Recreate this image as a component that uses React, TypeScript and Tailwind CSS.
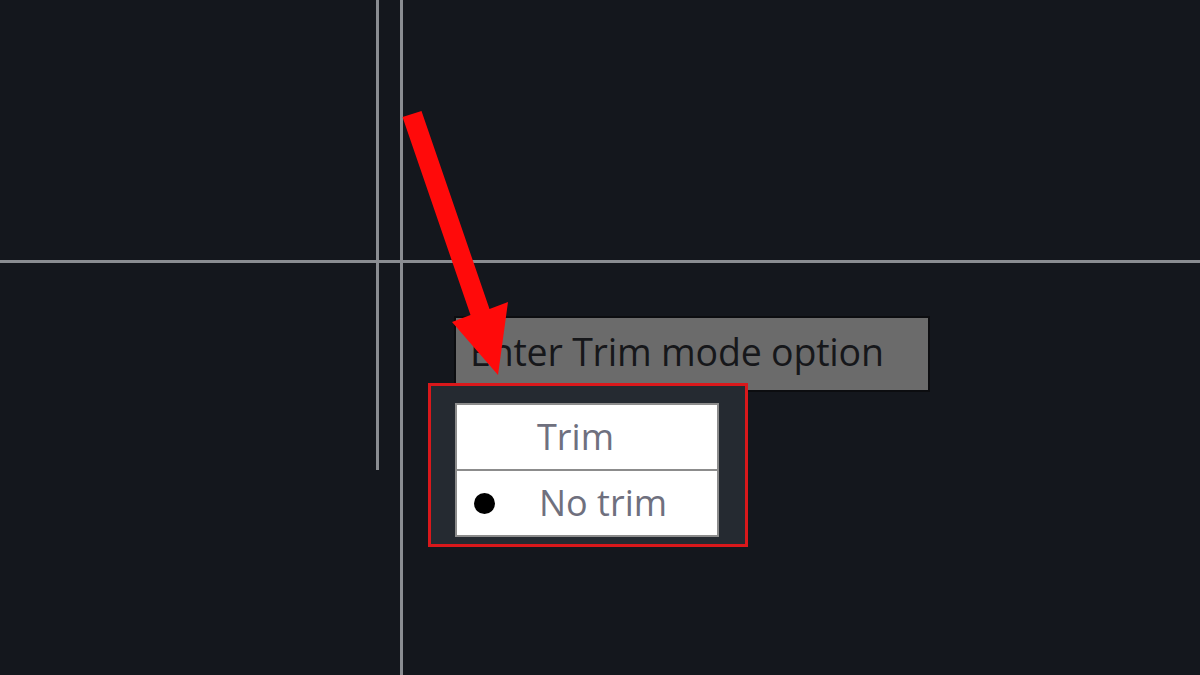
export default function App() {
  return (
    <div className="relative h-[675px] w-[1200px] overflow-hidden bg-[#14171d] font-['Open_Sans','Noto_Sans',sans-serif]">
      {/* crosshair */}
      <div className="absolute left-[376px] top-0 h-[470px] w-[3px] bg-[#8a8d92]" />
      <div className="absolute left-[400px] top-0 h-full w-[3px] bg-[#8a8d92]" />
      <div className="absolute left-0 top-[260px] h-[3px] w-full bg-[#8a8d92]" />

      {/* prompt tooltip */}
      <div className="absolute left-[454px] top-[316px] flex h-[76px] w-[476px] items-center border-2 border-[#0c0d10] bg-[#6b6b6b] pb-[4px] pl-[14px]">
        <span className="text-[37.5px] leading-none tracking-[-0.2px] text-[#16171a]">Enter Trim mode option</span>
      </div>

      {/* option menu, highlighted */}
      <div className="absolute left-[428px] top-[383px] h-[164px] w-[320px] border-[3px] border-[#d9181b] bg-[#252a31] pl-[24px] pt-[17px]">
        <div className="flex w-[264px] flex-col border-2 border-[#8c8c8c] bg-white text-[36px] text-[#6f707e]">
          <div className="flex h-[66px] items-center border-b-2 border-[#8c8c8c] pl-[80px] leading-none">Trim</div>
          <div className="flex h-[64px] items-center leading-none">
            <span className="ml-[17px] mr-[44px] h-[21px] w-[21px] rounded-full bg-black" />
            No trim
          </div>
        </div>
      </div>

      {/* red arrow */}
      <svg className="absolute left-0 top-0" width="1200" height="675" viewBox="0 0 1200 675">
        <polygon
          points="402.5,117 421.5,111 489.5,309 508,302 498,375 452,322 470.5,315"
          fill="#ff0a0a"
        />
      </svg>
    </div>
  );
}
